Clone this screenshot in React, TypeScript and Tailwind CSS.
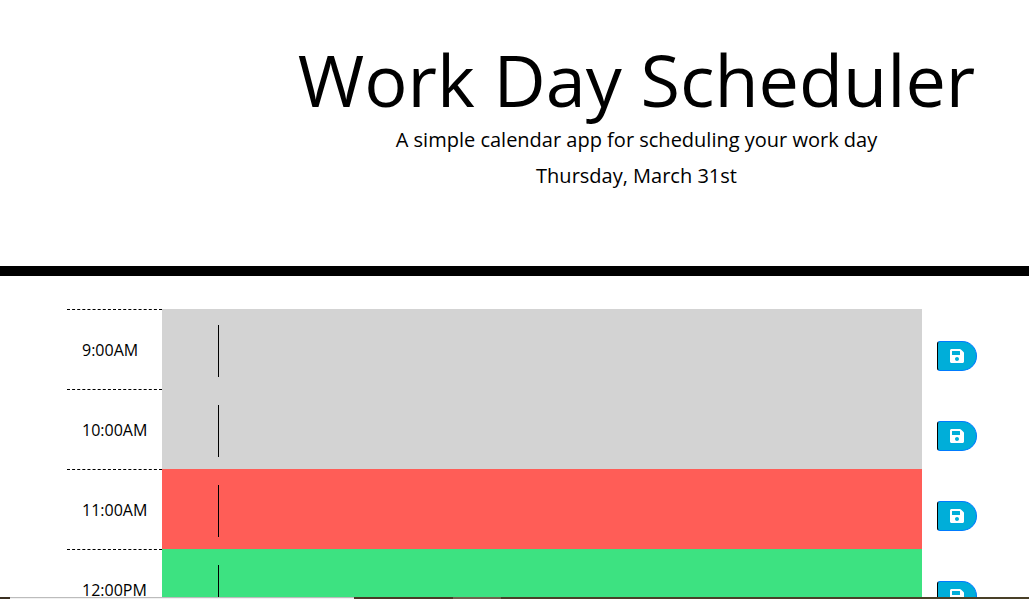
import { FaSave } from "react-icons/fa";

type Phase = "past" | "present" | "future";

const phaseColor: Record<Phase, string> = {
  past: "bg-[#d3d3d3]",
  present: "bg-[#ff5d57]",
  future: "bg-[#3de281]",
};

const hours: { time: string; phase: Phase }[] = [
  { time: "9:00AM", phase: "past" },
  { time: "10:00AM", phase: "past" },
  { time: "11:00AM", phase: "present" },
  { time: "12:00PM", phase: "future" },
];

function TimeBlock({ time, phase }: { time: string; phase: Phase }) {
  const id = `slot-${time}`;
  return (
    <div className="flex h-20 shrink-0">
      <label
        htmlFor={id}
        className="w-[95px] shrink-0 border-t border-dashed border-black pl-[15px] pt-7 text-base leading-6"
      >
        {time}
      </label>
      <div className={`flex grow py-4 pl-14 pr-4 ${phaseColor[phase]}`}>
        <textarea
          id={id}
          className="h-[52px] grow resize-none border-l border-black bg-transparent px-3 text-base outline-none"
        />
      </div>
      <div className="flex w-[70px] shrink-0 pl-[15px] pt-8">
        <button
          type="button"
          aria-label={`Save ${time}`}
          className="flex h-[30px] w-10 items-center justify-center rounded-l-[3px] rounded-r-[15px] border border-[#007bff] border-l-black bg-[#00aed9] text-white"
        >
          <FaSave className="size-4" />
        </button>
      </div>
    </div>
  );
}

export default function App() {
  return (
    <div className="flex h-screen flex-col overflow-hidden bg-white font-['Open_Sans',sans-serif] text-black">
      <header className="h-[276px] shrink-0 border-b-10 border-black pl-[244px] pt-9 text-center">
        <h1 className="whitespace-nowrap text-[72px] leading-[86px]">Work Day Scheduler</h1>
        <p className="mt-[3px] text-xl leading-[30px]">A simple calendar app for scheduling your work day</p>
        <p className="mt-1.5 text-xl leading-[30px]">Thursday, March 31st</p>
      </header>
      <main className="min-h-0 grow overflow-hidden pl-[67px] pr-[37px] pt-[33px]">
        {hours.map((h) => (
          <TimeBlock key={h.time} time={h.time} phase={h.phase} />
        ))}
      </main>
      <footer className="flex h-0.5 shrink-0 bg-[#494028]">
        <div className="w-[10px] bg-[#3b3022]" />
        <div className="w-[344px] border-t border-[#bcbcbc] bg-[#f1f1f1]" />
        <div className="w-[99px] bg-[#4a3a26]" />
        <div className="w-12 bg-[#70644e]" />
      </footer>
    </div>
  );
}
